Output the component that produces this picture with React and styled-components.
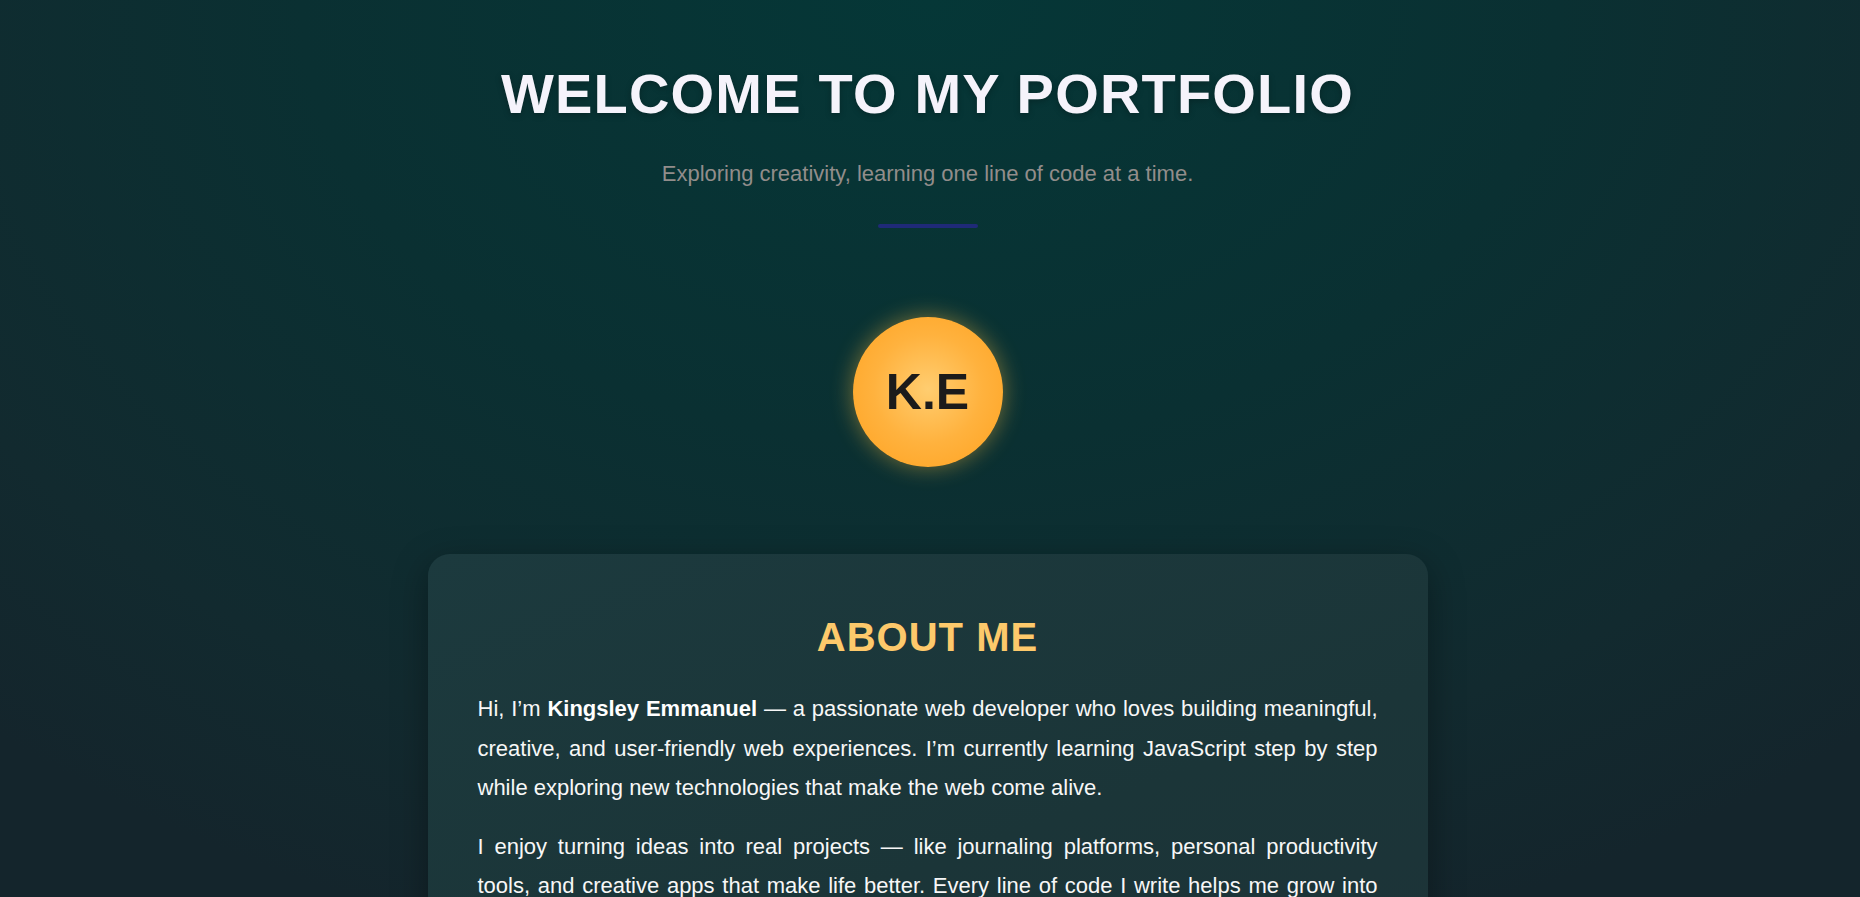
import styled, { createGlobalStyle } from 'styled-components';

const GlobalStyle = createGlobalStyle`
	* {
		box-sizing: border-box;
	}
	html, body {
		margin: 0;
		padding: 0;
	}
	body {
		min-height: 100vh;
		font-family: "Liberation Sans", Arial, sans-serif;
		color: #f4f2fb;
		background: radial-gradient(ellipse 75% 110% at 50% 0%, #053737 0%, #0a3032 45%, #122a2f 80%, #14252c 100%);
		background-attachment: fixed;
	}
`;

const Page = styled.main`
	display: flex;
	flex-direction: column;
	align-items: center;
	padding: 61px 23px 80px 18px;
`;

const Header = styled.header`
	display: flex;
	flex-direction: column;
	align-items: center;
`;

const Title = styled.h1`
	margin: 0;
	font-size: 56px;
	font-weight: 700;
	letter-spacing: 1.2px;
	text-transform: uppercase;
	color: #f5f3fb;
	text-shadow: 0 2px 6px rgba(0, 0, 0, 0.25);
`;

const Tagline = styled.p`
	margin: 35px 0 0;
	font-size: 22px;
	color: #928d8b;
`;

const Divider = styled.span`
	display: block;
	width: 100px;
	height: 4px;
	margin-top: 37px;
	border-radius: 2px;
	background: #1f2a78;
`;

const Avatar = styled.div`
	display: flex;
	align-items: center;
	justify-content: center;
	width: 150px;
	height: 150px;
	margin-top: 89px;
	border-radius: 50%;
	background: radial-gradient(circle at 50% 48%, #ffcd70 0%, #ffb23e 50%, #ffa11e 100%);
	box-shadow: 0 0 22px rgba(255, 190, 60, 0.45);
	font-size: 50px;
	font-weight: 700;
	color: #1b1b1b;
`;

const Card = styled.section`
	width: 1000px;
	margin-top: 87px;
	padding: 61px 50px 50px;
	border-radius: 22px;
	background: linear-gradient(160deg, #1c3a3e 0%, #1b3538 60%, #1d3338 100%);
	box-shadow: 0 10px 35px rgba(0, 0, 0, 0.35);
`;

const SectionTitle = styled.h2`
	margin: 0 0 29px;
	text-align: center;
	font-size: 40px;
	font-weight: 700;
	letter-spacing: 1px;
	text-transform: uppercase;
	color: #fdc96b;
`;

const Text = styled.p`
	margin: 0 0 19px;
	font-size: 22px;
	line-height: 1.8;
	text-align: justify;
	color: #f7f7f7;

	& strong {
		font-weight: 700;
		color: #ffffff;
	}
`;

export default function App() {
	return (
		<>
			<GlobalStyle />
			<Page>
				<Header>
					<Title>Welcome to my portfolio</Title>
					<Tagline>Exploring creativity, learning one line of code at a time.</Tagline>
					<Divider />
				</Header>

				<Avatar>K.E</Avatar>

				<Card>
					<SectionTitle>About me</SectionTitle>
					<Text>
						Hi, I’m <strong>Kingsley Emmanuel</strong> — a passionate web developer who loves
						building meaningful, creative, and user-friendly web experiences. I’m currently
						learning JavaScript step by step while exploring new technologies that make the web
						come alive.
					</Text>
					<Text>
						I enjoy turning ideas into real projects — like journaling platforms, personal
						productivity tools, and creative apps that make life better. Every line of code I
						write helps me grow into a{'\u00A0'}better developer and a more thoughtful problem
						solver.
					</Text>
				</Card>
			</Page>
		</>
	);
}
